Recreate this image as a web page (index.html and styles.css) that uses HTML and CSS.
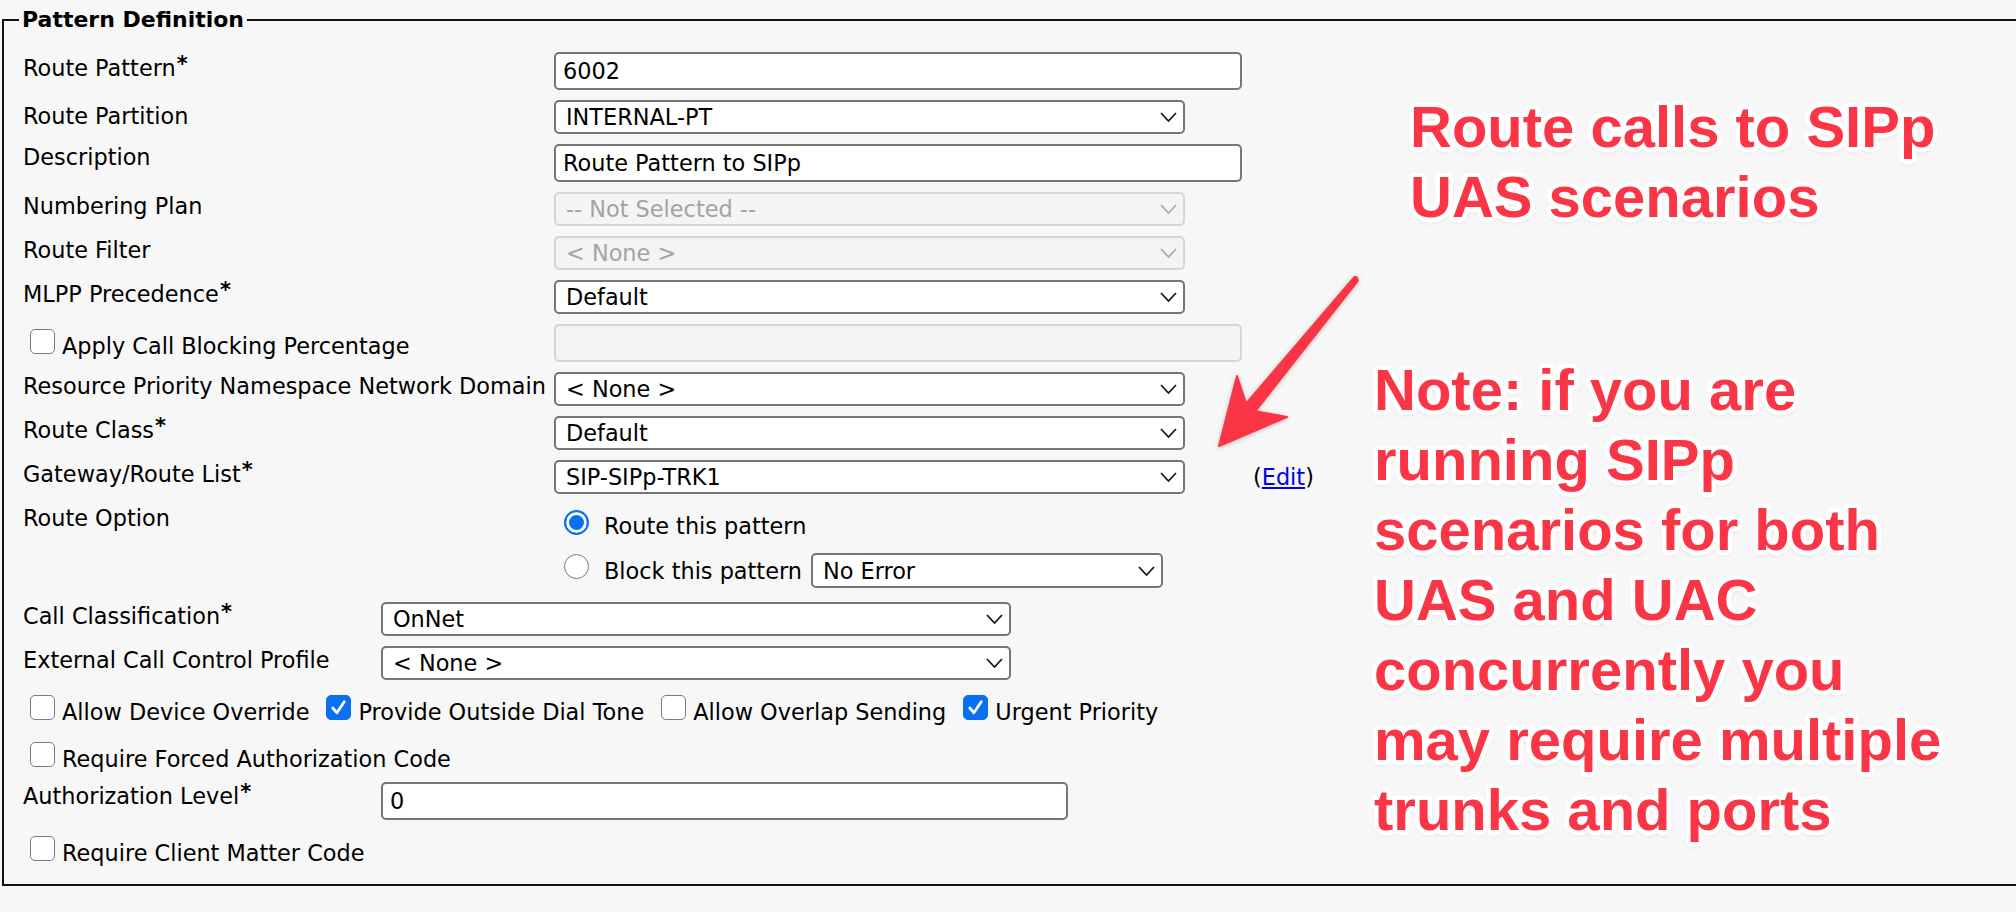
FILE: index.html
```html
<!DOCTYPE html>
<html lang="en">
<head>
<meta charset="utf-8">
<title>Pattern Definition</title>
<link rel="stylesheet" href="styles.css">
</head>
<body>
<div class="page">
  <fieldset class="panel">
    <legend class="legend">Pattern Definition</legend>
    <div class="sec sec-main">
      <div class="row">
        <div class="lbl lbl-hi">Route Pattern<span class="req">*</span></div>
        <div class="ctl input">6002</div>
      </div>
      <div class="row">
        <div class="lbl lbl-hi">Route Partition</div>
        <div class="ctl select"><span>INTERNAL-PT</span><svg class="chev" viewBox="0 0 17 10"><path d="M1 1 L8.5 9 L16 1"/></svg></div>
      </div>
      <div class="row">
        <div class="lbl lbl-lo">Description</div>
        <div class="ctl input">Route Pattern to SIPp</div>
      </div>
      <div class="row">
        <div class="lbl">Numbering Plan</div>
        <div class="ctl select disabled"><span>-- Not Selected --</span><svg class="chev" viewBox="0 0 17 10"><path d="M1 1 L8.5 9 L16 1"/></svg></div>
      </div>
      <div class="row">
        <div class="lbl">Route Filter</div>
        <div class="ctl select disabled"><span>&lt; None &gt;</span><svg class="chev" viewBox="0 0 17 10"><path d="M1 1 L8.5 9 L16 1"/></svg></div>
      </div>
      <div class="row">
        <div class="lbl">MLPP Precedence<span class="req">*</span></div>
        <div class="ctl select"><span>Default</span><svg class="chev" viewBox="0 0 17 10"><path d="M1 1 L8.5 9 L16 1"/></svg></div>
      </div>
      <div class="row">
        <label class="lbl lbl-check"><span class="box"></span>Apply Call Blocking Percentage</label>
        <div class="ctl input disabled"></div>
      </div>
      <div class="row">
        <div class="lbl">Resource Priority Namespace Network Domain</div>
        <div class="ctl select"><span>&lt; None &gt;</span><svg class="chev" viewBox="0 0 17 10"><path d="M1 1 L8.5 9 L16 1"/></svg></div>
      </div>
      <div class="row">
        <div class="lbl">Route Class<span class="req">*</span></div>
        <div class="ctl select"><span>Default</span><svg class="chev" viewBox="0 0 17 10"><path d="M1 1 L8.5 9 L16 1"/></svg></div>
      </div>
      <div class="row">
        <div class="lbl">Gateway/Route List<span class="req">*</span></div>
        <div class="ctl select"><span>SIP-SIPp-TRK1</span><svg class="chev" viewBox="0 0 17 10"><path d="M1 1 L8.5 9 L16 1"/></svg></div>
        <span class="edit">(<a href="#">Edit</a>)</span>
      </div>
      <div class="row row-opt">
        <div class="lbl lbl-opt">Route Option</div>
        <div class="opts">
          <div class="opt opt-1"><span class="radio on"></span><span class="opt-text">Route this pattern</span></div>
          <div class="opt opt-2"><span class="radio"></span><span class="opt-text">Block this pattern</span><div class="ctl select narrow"><span>No Error</span><svg class="chev" viewBox="0 0 17 10"><path d="M1 1 L8.5 9 L16 1"/></svg></div></div>
        </div>
      </div>
    </div>
    <div class="sec sec-call">
      <div class="row">
        <div class="lbl">Call Classification<span class="req">*</span></div>
        <div class="ctl select mid"><span>OnNet</span><svg class="chev" viewBox="0 0 17 10"><path d="M1 1 L8.5 9 L16 1"/></svg></div>
      </div>
      <div class="row">
        <div class="lbl">External Call Control Profile</div>
        <div class="ctl select mid"><span>&lt; None &gt;</span><svg class="chev" viewBox="0 0 17 10"><path d="M1 1 L8.5 9 L16 1"/></svg></div>
      </div>
      <div class="cbrow">
        <label class="check"><span class="box"></span>Allow Device Override</label>
        <label class="check"><span class="box on"><svg viewBox="0 0 22 22"><path d="M5.5 11.5 L9.5 16 L16.5 5.5"/></svg></span>Provide Outside Dial Tone</label>
        <label class="check"><span class="box"></span>Allow Overlap Sending</label>
        <label class="check"><span class="box on"><svg viewBox="0 0 22 22"><path d="M5.5 11.5 L9.5 16 L16.5 5.5"/></svg></span>Urgent Priority</label>
      </div>
      <div class="cbrow cbrow-2">
        <label class="check"><span class="box"></span>Require Forced Authorization Code</label>
      </div>
      <div class="row">
        <div class="lbl">Authorization Level<span class="req">*</span></div>
        <div class="ctl input mid">0</div>
      </div>
      <div class="cbrow cbrow-last">
        <label class="check"><span class="box"></span>Require Client Matter Code</label>
      </div>
    </div>
  </fieldset>

  <div class="note note-top">Route calls to SIPp<br>UAS scenarios</div>
  <svg class="arrow" viewBox="1200 260 180 200" width="180" height="200"><path d="M1219 446 L1287 417 L1255.3 411.2 L1357.9 280.6 Q1357 275.5 1354.1 277.4 L1246.1 403.6 L1237 376 Z"/></svg>
  <div class="note note-main">Note: if you are<br>running SIPp<br>scenarios for both<br>UAS and UAC<br>concurrently you<br>may require multiple<br>trunks and ports</div>
</div>
</body>
</html>
```

FILE: styles.css
```css
* { box-sizing: border-box; }
html, body { margin: 0; padding: 0; }
body {
  background: #f7f7f7;
  font-family: "DejaVu Sans", Verdana, sans-serif;
  font-size: 22.4px;
  line-height: 26px;
  color: #000;
}
.page { position: relative; width: 2016px; height: 912px; overflow: hidden; }

.panel {
  margin: 7px 0 0 2px;
  width: 2100px;
  min-width: 0;
  border: 2px solid #111;
  padding: 14px 0 0 15px;
}
.legend { padding: 0 3px; font-weight: bold; font-size: 22px; line-height: 26px; }

.sec { padding-left: 4px; }
.sec-call { padding-top: 4px; }

.row { display: flex; align-items: flex-start; padding: 5px 0; }
.row-opt { padding: 0; }

.lbl { flex: none; width: 531px; margin-top: 1px; white-space: nowrap; }
.lbl-hi { margin-top: 3px; }
.lbl-lo { margin-top: 0; }
.lbl-check { margin-top: 5px; }
.lbl-opt { margin-top: 6px; }
.sec-call .lbl { width: 358px; }

.req { font-size: 21px; line-height: 0; vertical-align: 5px; margin-left: 1px; font-weight: bold; }

.ctl {
  flex: none;
  display: flex;
  align-items: center;
  justify-content: space-between;
  height: 34px;
  border: 2px solid #767676;
  border-radius: 5px;
  background: #fff;
  padding: 0 6px 0 10px;
  white-space: nowrap;
}
.input { height: 38px; width: 688px; padding-left: 7px; }
.select { width: 631px; }
.select.mid { width: 630px; }
.input.mid { width: 687px; }
.select.narrow { width: 352px; height: 35px; }
.chev { width: 17px; height: 10px; flex: none; }
.chev path { fill: none; stroke: #1a1a1a; stroke-width: 1.8; }
.disabled { border-color: #d6d6d6; background: #f4f4f4; color: #a3a3a3; }
.disabled .chev path { stroke: #ababab; }

.edit { margin-left: 68px; align-self: center; }
.edit a { color: #0000ee; text-decoration: underline; }

.box {
  display: inline-block;
  width: 25px;
  height: 25px;
  border: 1.5px solid #7b7b7b;
  border-radius: 5px;
  background: #fff;
  margin: 0 7px 0 7px;
  vertical-align: baseline;
  overflow: hidden;
}
.box.on { background: #0b6ff2; border-color: #0b6ff2; }
.box svg { display: block; width: 100%; height: 100%; }
.box svg path { fill: none; stroke: #fff; stroke-width: 2.6; stroke-linecap: round; stroke-linejoin: round; }

.opts { display: flex; flex-direction: column; margin-left: 10px; }
.opt { display: flex; }
.opt-1 { height: 49px; align-items: flex-start; }
.opt-1 .radio { margin-top: 11px; }
.opt-1 .opt-text { margin-top: 14px; margin-left: 15px; }
.opt-2 { height: 45px; padding: 5px 0; align-items: center; }
.opt-2 .radio { align-self: flex-start; margin-top: 1px; }
.opt-2 .opt-text { margin-left: 15px; margin-right: 9px; }

.radio {
  flex: none;
  width: 25px;
  height: 25px;
  border-radius: 50%;
  border: 1.5px solid #7b7b7b;
  background: #fff;
}
.radio.on { border: 2.5px solid #0b6ff2; background: #0b6ff2; box-shadow: inset 0 0 0 3px #fff; }

.cbrow { display: flex; align-items: baseline; gap: 10px; height: 47px; padding-top: 10px; }
.cbrow-2 { height: 45px; }
.cbrow-last { height: 59px; padding-top: 11px; }
.check { white-space: nowrap; }

.note {
  position: absolute;
  font-family: "Liberation Sans", Arial, sans-serif;
  font-weight: bold;
  font-size: 58px;
  line-height: 70px;
  color: #fa3545;
  white-space: nowrap;
  text-shadow:
    4.5px 0 0.5px #fff, -4.5px 0 0.5px #fff, 0 4.5px 0.5px #fff, 0 -4.5px 0.5px #fff,
    3.2px 3.2px 0.5px #fff, -3.2px 3.2px 0.5px #fff, 3.2px -3.2px 0.5px #fff, -3.2px -3.2px 0.5px #fff,
    4.2px 1.7px 0.5px #fff, 1.7px 4.2px 0.5px #fff, -1.7px 4.2px 0.5px #fff, -4.2px 1.7px 0.5px #fff,
    -4.2px -1.7px 0.5px #fff, -1.7px -4.2px 0.5px #fff, 1.7px -4.2px 0.5px #fff, 4.2px -1.7px 0.5px #fff,
    0 3px 6px rgba(0, 0, 0, 0.18);
}
.note-top { left: 1410px; top: 92px; }
.note-main { left: 1374px; top: 355px; }

.arrow { position: absolute; left: 1200px; top: 260px; filter: drop-shadow(0 1px 2px rgba(0, 0, 0, 0.25)); }
.arrow path { fill: #fa3545; stroke: #fa3545; stroke-width: 2; stroke-linejoin: round; }
```
